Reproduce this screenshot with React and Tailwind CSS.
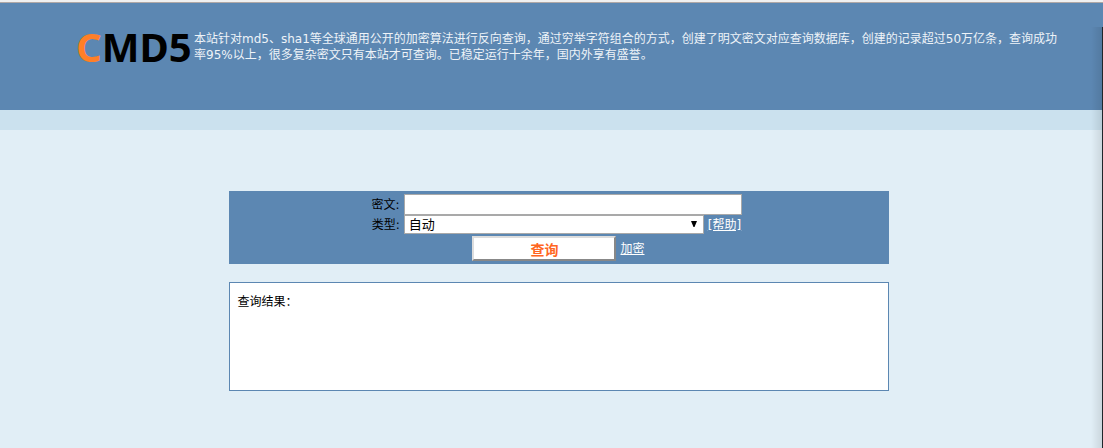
const sans = "font-['DejaVu_Sans','Noto_Sans_CJK_SC',sans-serif]";
const cjk = "font-['Noto_Sans_CJK_SC',sans-serif]";

function Header() {
  return (
    <header className="border-t-2 border-[#f0f0f0] bg-[#5c87b2]">
      <div className="flex h-[108px] items-start gap-1 border-t border-[#b0a8a6] pr-[43px] pl-[76px]">
        <h1 className="w-[114px] shrink-0 pt-[23px] font-['Noto_Sans',sans-serif] text-[40px] leading-[42px] font-bold text-black">
          <span className="text-[#ff7f27]">C</span>MD5
        </h1>
        <p className={`pt-7 text-[12px] leading-4 text-[#eef3f8] ${sans}`}>
          本站针对md5、sha1等全球通用公开的加密算法进行反向查询，通过穷举字符组合的方式，创建了明文密文对应查询数据库，创建的记录超过50万亿条，查询成功率95%以上，很多复杂密文只有本站才可查询。已稳定运行十余年，国内外享有盛誉。
        </p>
      </div>
    </header>
  );
}

function QueryForm() {
  return (
    <form
      className={`flex flex-col items-center bg-[#5c87b2] py-[3px] text-[12px] text-black ${sans}`}
      onSubmit={(e) => e.preventDefault()}
    >
      <div className="flex items-center gap-1 pr-1">
        <label htmlFor="cipher">密文:</label>
        <input
          id="cipher"
          type="text"
          className="h-[21px] w-[338px] border border-[#a9a9a9] bg-white px-1 outline-none"
        />
      </div>
      <div className="flex items-center gap-1 pr-1">
        <label htmlFor="kind">类型:</label>
        <div className="relative">
          <select
            id="kind"
            className="block h-[19px] w-[300px] appearance-none border border-[#a9a9a9] bg-white pl-1 text-[13px] leading-4 outline-none"
          >
            <option>自动</option>
          </select>
          <svg
            className="pointer-events-none absolute top-[6px] right-[7px] h-[6px] w-[6px]"
            viewBox="0 0 6 6"
            aria-hidden="true"
          >
            <path d="M0 0H6L3.5 6H2.5Z" fill="#000" />
          </svg>
        </div>
        <a href="#help" className="text-white underline">
          [帮助]
        </a>
      </div>
      <div className="flex items-center gap-1 pt-[2px]">
        <button
          type="submit"
          className={`h-[25px] w-[144px] border-2 border-t-[#dddddd] border-r-[#888888] border-b-[#888888] border-l-[#dddddd] bg-white text-[14px] leading-5 font-bold text-[#ff6622] ${cjk}`}
        >
          查询
        </button>
        <a href="#encrypt" className="text-white underline">
          加密
        </a>
      </div>
    </form>
  );
}

export default function App() {
  return (
    <div className="relative min-h-screen bg-[#e1eef6]">
      <Header />
      <div className="h-5 bg-[#cbe1ee]" />
      <div className="pt-[61px] pl-[14px]">
        <main className="mx-auto max-w-[660px]">
          <QueryForm />
          <section
            className={`mt-[18px] min-h-[109px] border border-[#5c87b2] bg-white px-2 pt-[10px] text-[12px] leading-4 text-black ${cjk}`}
          >
            查询结果：
          </section>
        </main>
      </div>
      <div className="pointer-events-none absolute top-[27px] right-0 bottom-0 w-3 border-r border-[#20262b] bg-linear-to-r from-transparent to-black/10" />
    </div>
  );
}
